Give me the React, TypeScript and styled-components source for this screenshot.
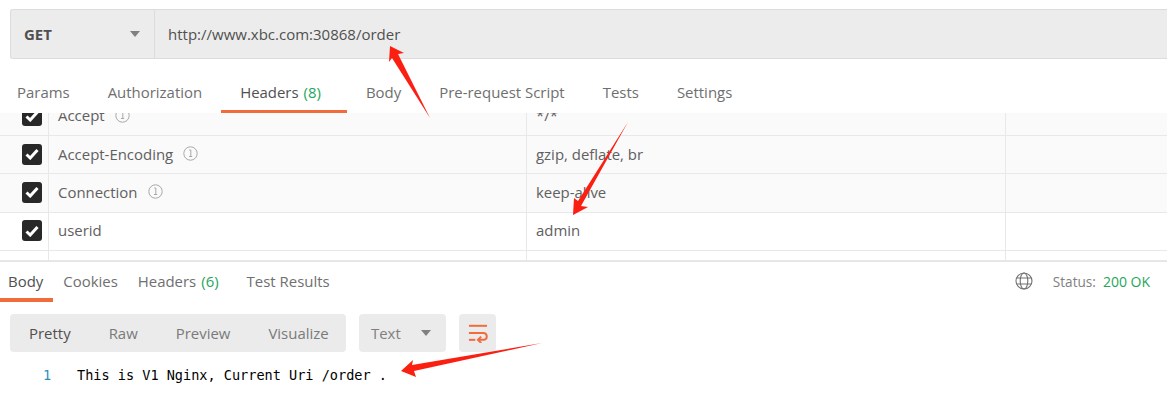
import React from "react";
import styled, { createGlobalStyle } from "styled-components";

const Global = createGlobalStyle`
  html, body { margin: 0; padding: 0; background: #fff; }
  body { font-family: "Open Sans", "Liberation Sans", sans-serif; font-size: 14.95px; color: #505050; overflow: hidden; }
`;

const Page = styled.div`
  position: relative;
  width: 1167px;
  height: 416px;
  overflow: hidden;
  display: flex;
  flex-direction: column;
`;

const RequestBar = styled.div`
  margin: 9px 0 0 10px;
  height: 50px;
  box-sizing: border-box;
  display: flex;
  align-items: center;
  background: #ececec;
  border: 1px solid #dcdcdc;
  border-right: none;
  border-radius: 3px 0 0 3px;
`;

const Method = styled.div`
  width: 144px;
  height: 100%;
  box-sizing: border-box;
  padding: 0 14px 0 13px;
  display: flex;
  align-items: center;
  justify-content: space-between;
  border-right: 1px solid #dcdcdc;
  font-weight: 700;
  color: #505050;
`;

const Caret = styled.span<{ $color?: string }>`
  width: 0;
  height: 0;
  border-left: 5px solid transparent;
  border-right: 5px solid transparent;
  border-top: 6px solid ${(p) => p.$color ?? "#808080"};
`;

const Url = styled.div`
  padding-left: 13px;
  color: #505050;
  font-size: 15px;
`;

const TabBar = styled.div<{ $height: number; $top: number }>`
  display: flex;
  align-items: stretch;
  height: ${(p) => p.$height}px;
  margin-top: ${(p) => p.$top}px;
  flex-shrink: 0;
`;

const ReqTab = styled.div<{ $active?: boolean }>`
  padding: 1px 19px 0;
  display: flex;
  align-items: center;
  box-sizing: border-box;
  height: 100%;
  color: ${(p) => (p.$active ? "#505050" : "#6f6f6f")};
  border-bottom: 3px solid ${(p) => (p.$active ? "#f26b3a" : "transparent")};
  white-space: nowrap;
  &:first-child { padding-left: 17px; }
`;

const Count = styled.span<{ $after: number }>`
  color: #26a65b;
  margin-left: 5px;
  margin-right: ${(p) => p.$after}px;
`;

const Table = styled.div`
  height: 147px;
  overflow: hidden;
  flex-shrink: 0;
`;

const Scroller = styled.div`
  margin-top: -15.3px;
`;

const Row = styled.div<{ $tint?: boolean }>`
  height: 38.3px;
  box-sizing: border-box;
  display: grid;
  grid-template-columns: 49px 478px 479px 1fr;
  background: ${(p) => (p.$tint ? "#fafafa" : "#fff")};
  border-bottom: 1px solid #e8e8e8;
`;

const CheckCell = styled.div`
  display: flex;
  align-items: center;
  padding: 0 0 1px 22px;
  border-right: 1px solid #e8e8e8;
`;

const Box = styled.div`
  width: 20px;
  height: 21px;
  border-radius: 3px;
  background: #282828;
  display: flex;
  align-items: center;
  justify-content: center;
`;

const Cell = styled.div`
  display: flex;
  align-items: center;
  padding: 0 0 2px 9px;
  border-right: 1px solid #e8e8e8;
  color: #606060;
  &:last-child { border-right: none; }
`;

const InfoIcon = styled.svg`
  margin-left: 10px;
  width: 15px;
  height: 15px;
  flex-shrink: 0;
`;

const Divider = styled.div`
  height: 2px;
  background: #e6e6e6;
  flex-shrink: 0;
`;

const ResBar = styled.div`
  display: flex;
  justify-content: space-between;
  height: 40px;
  flex-shrink: 0;
`;

const ResTabs = styled.div`
  display: flex;
`;

const ResTab = styled.div<{ $active?: boolean }>`
  padding: 2px 10px 0;
  display: flex;
  align-items: center;
  box-sizing: border-box;
  height: 100%;
  color: ${(p) => (p.$active ? "#505050" : "#6f6f6f")};
  border-bottom: 4px solid ${(p) => (p.$active ? "#f26b3a" : "transparent")};
  white-space: nowrap;
  &:first-child { padding-left: 8px; }
`;

const Status = styled.div`
  display: flex;
  align-items: center;
  padding: 0 17px 2px 0;
  color: #808080;
  font-size: 13.6px;
`;

const Globe = styled.svg`
  width: 18px;
  height: 18px;
  margin-right: 20px;
`;

const Ok = styled.span`
  color: #26a65b;
  margin-left: 7px;
  font-size: 14px;
`;

const Toolbar = styled.div`
  display: flex;
  margin: 12px 0 0 10px;
  height: 38px;
  flex-shrink: 0;
`;

const Group = styled.div`
  width: 336px;
  display: flex;
  background: #ebebeb;
  border-radius: 4px;
`;

const ViewBtn = styled.div<{ $active?: boolean }>`
  padding: 0 19px;
  display: flex;
  align-items: center;
  color: ${(p) => (p.$active ? "#505050" : "#7a7a7a")};
`;

const Select = styled.div`
  width: 87px;
  margin-left: 13px;
  box-sizing: border-box;
  padding: 0 15px 0 12px;
  display: flex;
  align-items: center;
  justify-content: space-between;
  background: #ebebeb;
  border-radius: 4px;
  color: #808080;
`;

const WrapBtn = styled.div`
  width: 37px;
  margin-left: 13px;
  background: #ebebeb;
  border-radius: 4px;
  display: flex;
  align-items: center;
  justify-content: center;
`;

const CodeLine = styled.div`
  display: flex;
  margin-top: 14px;
  font-family: "DejaVu Sans Mono", "Liberation Mono", monospace;
  font-size: 13.55px;
  line-height: 18px;
  color: #000;
`;

const LineNo = styled.span`
  width: 77px;
  box-sizing: border-box;
  padding-left: 43px;
  color: #2a8fc0;
`;

const Annotations = styled.svg`
  position: absolute;
  left: 0;
  top: 0;
  width: 1167px;
  height: 416px;
  pointer-events: none;
`;

const Check = () => (
  <svg width="14" height="12" viewBox="0 0 14 12">
    <path d="M1.5 6.5 L5.2 10 L12.5 2" fill="none" stroke="#fff" strokeWidth="3" />
  </svg>
);

const Info = () => (
  <InfoIcon viewBox="0 0 15 15">
    <circle cx="7.5" cy="7.5" r="6.7" fill="none" stroke="#a8a8a8" strokeWidth="1" />
    <path d="M6.2 4h1.6v6M6 10.5h3.2" fill="none" stroke="#a8a8a8" strokeWidth="1" />
  </InfoIcon>
);

const rows = [
  { key: "Accept", value: "*/*", info: true, tint: true },
  { key: "Accept-Encoding", value: "gzip, deflate, br", info: true, tint: true },
  { key: "Connection", value: "keep-alive", info: true, tint: true },
  { key: "userid", value: "admin", info: false, tint: false },
];

export default function App() {
  return (
    <Page>
      <Global />
      <RequestBar>
        <Method>
          GET
          <Caret />
        </Method>
        <Url>http://www.xbc.com:30868/order</Url>
      </RequestBar>

      <TabBar $height={41} $top={13}>
        <ReqTab>Params</ReqTab>
        <ReqTab>Authorization</ReqTab>
        <ReqTab $active>
          Headers<Count $after={7}>(8)</Count>
        </ReqTab>
        <ReqTab>Body</ReqTab>
        <ReqTab>Pre-request Script</ReqTab>
        <ReqTab>Tests</ReqTab>
        <ReqTab>Settings</ReqTab>
      </TabBar>

      <Table>
        <Scroller>
          {rows.map((r) => (
            <Row key={r.key} $tint={r.tint}>
              <CheckCell>
                <Box>
                  <Check />
                </Box>
              </CheckCell>
              <Cell>
                {r.key}
                {r.info && <Info />}
              </Cell>
              <Cell>{r.value}</Cell>
              <Cell />
            </Row>
          ))}
          <Row>
            <CheckCell />
            <Cell />
            <Cell />
            <Cell />
          </Row>
        </Scroller>
      </Table>
      <Divider />

      <ResBar>
        <ResTabs>
          <ResTab $active>Body</ResTab>
          <ResTab>Cookies</ResTab>
          <ResTab>
            Headers<Count $after={8}>(6)</Count>
          </ResTab>
          <ResTab>Test Results</ResTab>
        </ResTabs>
        <Status>
          <Globe viewBox="0 0 18 18" fill="none" stroke="#707070" strokeWidth="1.1">
            <circle cx="9" cy="9" r="8" />
            <ellipse cx="9" cy="9" rx="3.8" ry="8" />
            <path d="M1.8 6h14.4M1.8 12h14.4" />
          </Globe>
          Status:
          <Ok>200 OK</Ok>
        </Status>
      </ResBar>

      <Toolbar>
        <Group>
          <ViewBtn $active>Pretty</ViewBtn>
          <ViewBtn>Raw</ViewBtn>
          <ViewBtn>Preview</ViewBtn>
          <ViewBtn>Visualize</ViewBtn>
        </Group>
        <Select>
          Text
          <Caret />
        </Select>
        <WrapBtn>
          <svg width="20" height="19" viewBox="0 0 22 21" fill="none" stroke="#f26b3a" strokeWidth="2.2">
            <path d="M1 2h20" />
            <path d="M1 10h16.5a3.8 3.8 0 0 1 0 7.5h-6" />
            <path d="M1 17.5h7" />
            <path d="M14.5 14 L11 17.5 L14.5 21" />
          </svg>
        </WrapBtn>
      </Toolbar>

      <CodeLine>
        <LineNo>1</LineNo>
        This is V1 Nginx, Current Uri /order .
      </CodeLine>

      <Annotations viewBox="0 0 1167 416">
        <polygon points="390,46 404,53 398,54 430,118 392,58 389,62" fill="#fb1f12" />
        <polygon points="628,122 581,206 588,207 573,215 574,198 578,201" fill="#fb1f12" />
        <polygon points="542,343 414,371 416,377 401,371 413,360 412,365" fill="#fb1f12" />
      </Annotations>
    </Page>
  );
}
